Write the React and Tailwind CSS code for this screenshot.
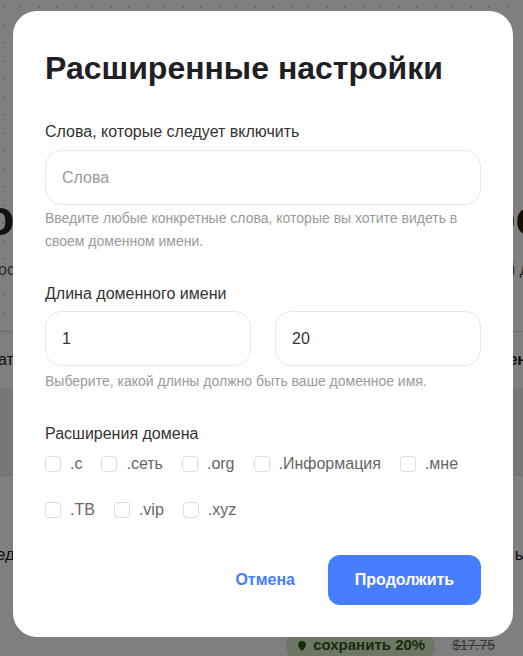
import React, { useState } from 'react';

const extensions = ['.c', '.сеть', '.org', '.Информация', '.мне', '.ТВ', '.vip', '.xyz'];

const Background = () => (
  <div className="min-h-[656px] w-full bg-white text-[#222] overflow-hidden">
    <div className="h-[332px] border-b border-[#ddd] bg-[radial-gradient(circle,#d4d4d4_1.2px,transparent_1.3px)] bg-[size:18px_18px] bg-[position:-6px_-2px] pt-[190px]">
      <div className="flex justify-between text-[50px] font-bold leading-[56px] whitespace-nowrap">
        <span className="-ml-[16px]">о</span>
        <span className="-mr-[20px] text-[#2a1a00]">оос</span>
      </div>
      <div className="mt-[12px] flex justify-between text-[16px] text-[#555] whitespace-nowrap">
        <span className="-ml-[2px]">ос</span>
        <span className="-mr-[6px]">й д</span>
      </div>
    </div>
    <div className="flex justify-between h-[56px] items-center text-[16px] font-bold whitespace-nowrap">
      <span className="-ml-[2px] font-normal">ат</span>
      <span className="-mr-[4px]">ен</span>
    </div>
    <div className="h-[88px] bg-[#efefef] border-b border-[#ddd]"></div>
    <div className="flex justify-between mt-[66px] text-[17px] whitespace-nowrap">
      <span className="-ml-[4px]">ед</span>
      <span className="-mr-[4px]">ы</span>
    </div>
    <div className="flex justify-end items-center gap-[17px] pr-[28px] mt-[62px]">
      <div className="flex items-center gap-[5px] rounded-full bg-[#dcefc6] px-[10px] h-[32px] text-[#2c5a16] text-[15px] font-bold">
        <svg width="12" height="12" viewBox="0 0 24 24" fill="currentColor">
          <path d="M12 2a8 8 0 0 0-8 8c0 5.5 8 12 8 12s8-6.5 8-12a8 8 0 0 0-8-8z" />
        </svg>
        сохранить 20%
      </div>
      <span className="text-[14px] text-[#777] line-through">$17.75</span>
    </div>
  </div>
);

const App = () => {
  const [words, setWords] = useState('');
  const [min, setMin] = useState('1');
  const [max, setMax] = useState('20');
  const [checked, setChecked] = useState({});

  const toggle = (ext) => setChecked({ ...checked, [ext]: !checked[ext] });

  return (
    <div className="relative font-['Liberation_Sans',Arial,sans-serif]">
      <Background />
      <div className="fixed inset-0 bg-black/50">
        <div className="absolute left-[13px] top-[11px] w-[500px] rounded-[24px] bg-white px-8 pt-[39px] pb-[32px]">
          <h1 className="text-[32px] leading-[36px] font-bold text-[#1f2024]">Расширенные настройки</h1>

          <div className="mt-[35px]">
            <label className="block text-[16px] leading-[22px] text-[#333]">Слова, которые следует включить</label>
            <input
              value={words}
              onChange={(e) => setWords(e.target.value)}
              placeholder="Слова"
              className="mt-[7px] h-[55px] w-full rounded-[16px] border border-[#e8e8e8] px-4 text-[16px] text-[#333] placeholder:text-[#9a9a9a] outline-none"
            />
            <p className="mt-[2px] text-[14px] leading-[23px] text-[#9a9a9a]">
              Введите любые конкретные слова, которые вы хотите видеть в своем доменном имени.
            </p>
          </div>

          <div className="mt-[30px]">
            <label className="block text-[16px] leading-[22px] text-[#333]">Длина доменного имени</label>
            <div className="mt-[6px] flex gap-[24px]">
              <input
                value={min}
                onChange={(e) => setMin(e.target.value)}
                className="h-[55px] w-full min-w-0 rounded-[16px] border border-[#e8e8e8] px-4 text-[16px] text-[#333] outline-none"
              />
              <input
                value={max}
                onChange={(e) => setMax(e.target.value)}
                className="h-[55px] w-full min-w-0 rounded-[16px] border border-[#e8e8e8] px-4 text-[16px] text-[#333] outline-none"
              />
            </div>
            <p className="mt-[4px] text-[14px] leading-[23px] text-[#9a9a9a]">
              Выберите, какой длины должно быть ваше доменное имя.
            </p>
          </div>

          <div className="mt-[30px]">
            <label className="block text-[16px] leading-[22px] text-[#333]">Расширения домена</label>
            <div className="mt-[8px] flex flex-wrap gap-x-[19px] gap-y-[24px]">
              {extensions.map((ext) => (
                <label key={ext} className="flex items-center gap-[9px] h-[22px] cursor-pointer">
                  <span
                    onClick={() => toggle(ext)}
                    className={`h-[16px] w-[16px] rounded-[4px] border ${checked[ext] ? 'border-[#477dff] bg-[#477dff]' : 'border-[#dcdcdc] bg-white'}`}
                  ></span>
                  <span className="text-[16px] text-[#666]">{ext}</span>
                </label>
              ))}
            </div>
          </div>

          <div className="mt-[34px] flex items-center justify-end gap-[33px]">
            <button className="text-[16px] font-bold text-[#477dff]">Отмена</button>
            <button className="h-[50px] w-[153px] rounded-[12px] bg-[#477dff] text-[16px] font-bold text-white">
              Продолжить
            </button>
          </div>
        </div>
      </div>
    </div>
  );
};

export default App;
